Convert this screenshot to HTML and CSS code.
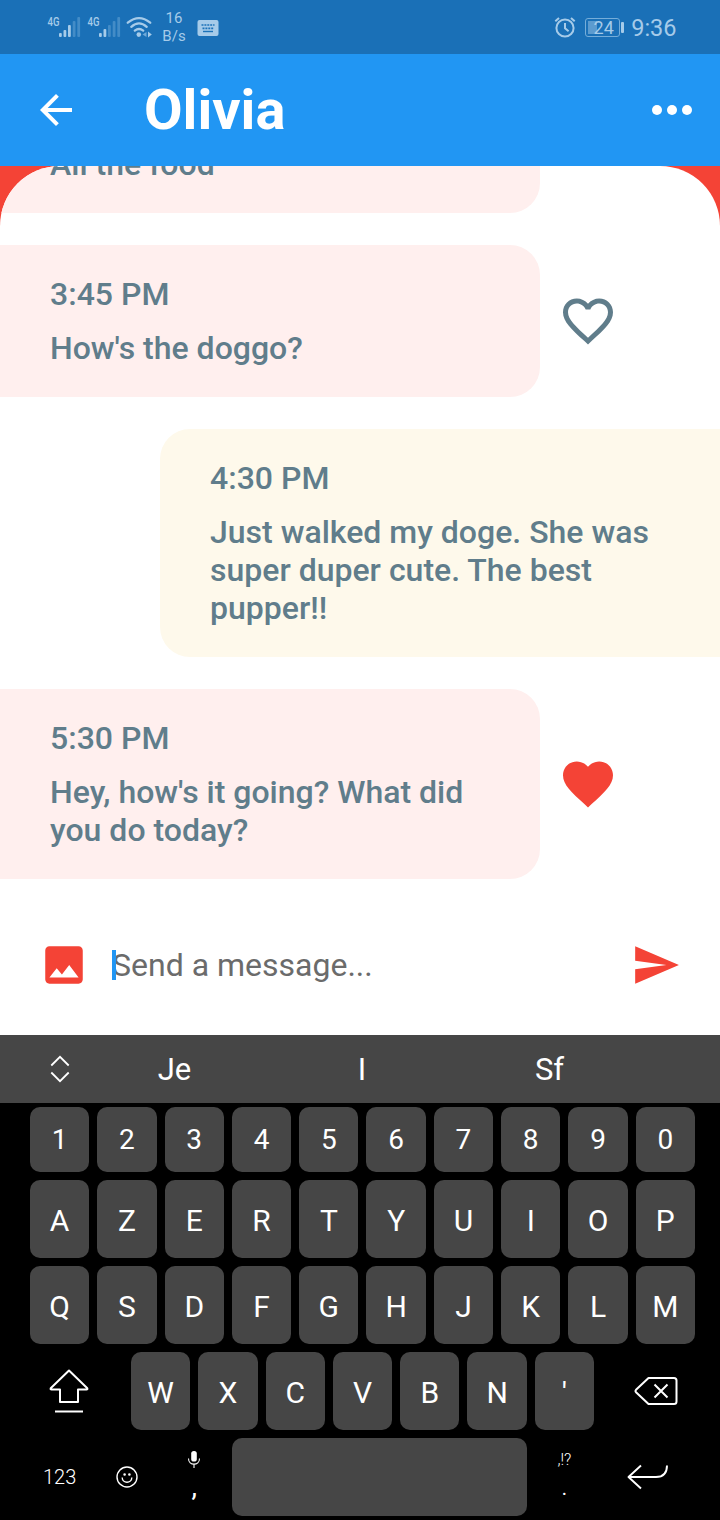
FILE: index.html
```html
<!DOCTYPE html>
<html lang="en">
<head>
<meta charset="utf-8">
<title>Olivia</title>
<link rel="stylesheet" href="styles.css">
</head>
<body>
<div class="screen">
  <header class="status">
    <svg class="status-signals" width="106" height="28" viewBox="47 13 106 28">
      <g fill="#a6cbe9">
        <rect x="59" y="33" width="2.8" height="4" rx="1"/><rect x="63.5" y="30" width="2.8" height="7" rx="1"/><rect x="68" y="25" width="2.8" height="12" rx="1"/>
        <rect x="99" y="33" width="2.8" height="4" rx="1"/><rect x="103.500" y="29" width="2.8" height="8" rx="1"/>
      </g>
      <g fill="#438cc7">
        <rect x="72.700" y="21" width="2.800" height="16" rx="1"/><rect x="77.300" y="17" width="2.800" height="20" rx="1"/>
        <rect x="108" y="25" width="2.800" height="12" rx="1"/><rect x="112.700" y="21" width="2.800" height="16" rx="1"/><rect x="117.300" y="17" width="2.800" height="20" rx="1"/>
      </g>
      <g class="network"><text x="47.500" y="26" textLength="12" lengthAdjust="spacingAndGlyphs">4G</text><text x="87.500" y="26" textLength="12" lengthAdjust="spacingAndGlyphs">4G</text></g>
      <g fill="none" stroke="#a6cbe9" stroke-width="2.300" stroke-linecap="round">
        <path d="M127.800 22.700Q139 13.500 150.200 22.700M131.300 26.800Q139 20 146.700 26.800M134.800 30.600Q139 27.300 143.200 30.600"/>
      </g>
      <circle cx="138.800" cy="34.600" r="2.300" fill="#a6cbe9"/>
      <path d="M146.500 32v5l-4-2.500z" fill="#6fa9d8"/><path d="M148 31.500v6l3.800-3z" fill="#a6cbe9"/>
    </svg>
    <div class="speed"><span>16</span><span>B/s</span></div>
    <svg class="status-keyboard" width="22" height="16" viewBox="0 0 22 16"><rect x=".5" width="21" height="16" rx="2" fill="#a6cbe9"/><path d="M4.500 5h13M5.500 8.300h11" stroke="#1c72b8" stroke-width="1.700" stroke-dasharray="2 .9"/><path d="M6 11.500h10" stroke="#1c72b8" stroke-width="1.400"/></svg>
    <svg class="alarm" width="22" height="22" viewBox="0 0 22 22" fill="none" stroke="#a6cbe9" stroke-width="2"><circle cx="11" cy="12" r="8.600"/><path d="M11 7v5.300l3.600 2.900M1.300 5.300 5 2M20.700 5.300 17 2"/></svg>
    <div class="battery"><span>24</span></div><i class="battery-tip"></i>
    <time class="clock">9:36</time>
  </header>

  <nav class="appbar">
    <svg class="back" width="48" height="48" viewBox="0 0 24 24" fill="#fff"><path d="M20 11H7.830l5.590-5.590L12 4l-8 8 8 8 1.410-1.410L7.830 13H20v-2z"/></svg>
    <h1 class="title">Olivia</h1>
    <svg width="60" height="60" viewBox="0 0 24 24" fill="#fff"><circle cx="6" cy="12" r="2"/><circle cx="12" cy="12" r="2"/><circle cx="18" cy="12" r="2"/></svg>
  </nav>

  <main class="backdrop">
    <section class="messages">
      <div class="row"><article class="bubble"><div class="time">3:15 PM</div><p class="text">All the food</p></article></div>
      <div class="row">
        <article class="bubble"><div class="time">3:45 PM</div><p class="text">How's the doggo?</p></article>
        <svg class="heart" width="60" height="60" viewBox="0 0 24 24" fill="#607d8b"><path d="M16.500 3c-1.740 0-3.410.810-4.500 2.090C10.910 3.810 9.240 3 7.500 3 4.420 3 2 5.420 2 8.500c0 3.780 3.400 6.860 8.550 11.540L12 21.350l1.450-1.320C18.600 15.360 22 12.280 22 8.500 22 5.420 19.580 3 16.500 3zm-4.400 15.550l-.1.100-.1-.1C7.140 14.240 4 11.390 4 8.500 4 6.500 5.500 5 7.500 5c1.540 0 3.040.990 3.570 2.360h1.870C13.460 5.990 14.960 5 16.500 5c2 0 3.500 1.500 3.500 3.500 0 2.890-3.140 5.740-7.900 10.050z"/></svg>
      </div>
      <div class="row"><article class="bubble mine"><div class="time">4:30 PM</div><p class="text">Just walked my doge. She was<br>super duper cute. The best<br>pupper!!</p></article></div>
      <div class="row">
        <article class="bubble"><div class="time">5:30 PM</div><p class="text">Hey, how's it going? What did<br>you do today?</p></article>
        <svg class="heart" width="60" height="60" viewBox="0 0 24 24" fill="#f44336"><path d="M12 21.350l-1.450-1.320C5.400 15.360 2 12.280 2 8.500 2 5.420 4.420 3 7.500 3c1.740 0 3.410.810 4.500 2.090C13.090 3.810 14.760 3 16.500 3 19.580 3 22 5.420 22 8.500c0 3.780-3.400 6.860-8.550 11.540L12 21.350z"/></svg>
      </div>
    </section>
  </main>

  <div class="composer">
    <svg width="50" height="50" viewBox="0 0 24 24" fill="#f44336"><path d="M21 19V5c0-1.100-.9-2-2-2H5c-1.100 0-2 .9-2 2v14c0 1.100.9 2 2 2h14c1.100 0 2-.9 2-2zM8.500 13.500l2.500 3.010L14.500 12l4.500 6H5l3.500-4.500z"/></svg>
    <div class="field"><i class="caret"></i><span class="hint">Send a message...</span></div>
    <svg width="50" height="50" viewBox="0 0 24 24" fill="#f44336"><path d="M2.010 21L23 12 2.010 3 2 10l15 2-15 2z"/></svg>
  </div>

  <div class="suggestions">
    <svg class="expand" width="20" height="28" viewBox="0 0 20 28" fill="none" stroke="#fff" stroke-width="1.800"><path d="M1.300 10.500 10 1.800l8.700 8.700M1.300 17.500l8.700 8.700 8.700-8.700"/></svg>
    <span>Je</span><span>I</span><span>Sf</span>
  </div>
  <div class="keyboard">
    <div class="keys numbers"><b>1</b><b>2</b><b>3</b><b>4</b><b>5</b><b>6</b><b>7</b><b>8</b><b>9</b><b>0</b></div>
    <div class="keys"><b>A</b><b>Z</b><b>E</b><b>R</b><b>T</b><b>Y</b><b>U</b><b>I</b><b>O</b><b>P</b></div>
    <div class="keys"><b>Q</b><b>S</b><b>D</b><b>F</b><b>G</b><b>H</b><b>J</b><b>K</b><b>L</b><b>M</b></div>
    <div class="keys">
      <div class="plain wide shift"><svg width="40" height="46" viewBox="0 0 40 46" fill="none" stroke="#fff" stroke-width="2" stroke-linejoin="round"><path d="M20 2.500 1.700 20.300q-.5 1.200.8 1.200H11V34h18V21.500h8.500q1.300 0 .8-1.200z"/><path d="M6 43.500h28"/></svg></div>
      <b>W</b><b>X</b><b>C</b><b>V</b><b>B</b><b>N</b><b>'</b>
      <div class="plain wide erase"><svg width="44" height="30" viewBox="0 0 44 30" fill="none" stroke="#fff" stroke-width="2" stroke-linejoin="round"><path d="M14.500 2H40q2.500 0 2.500 2.500v21q0 2.500-2.500 2.500H14.500L2 16.200q-1-1.200 0-2.400z"/><path d="M20.500 8.500l13 13M33.500 8.500l-13 13"/></svg></div>
    </div>
    <div class="keys">
      <div class="plain mode">123</div>
      <div class="plain"><svg width="22" height="22" viewBox="0 0 22 22" fill="none" stroke="#fff" stroke-width="1.400"><circle cx="11" cy="11" r="10"/><path d="M6.200 11.500c0 6.400 9.600 6.400 9.600 0"/><circle cx="8.600" cy="8.500" r=".6"/><circle cx="13.400" cy="8.500" r=".6"/></svg></div>
      <div class="plain stack mic"><svg width="14" height="18" viewBox="0 0 14 18"><rect x="4.200" y="1" width="5.600" height="10.500" rx="2.600" fill="#fff"/><path d="M1.500 8.500c0 7.500 11 7.500 11 0M7 14.500V18" fill="none" stroke="#fff" stroke-width="1.100"/></svg><span class="comma">,</span></div>
      <b class="space"></b>
      <div class="plain stack marks"><span class="small">,!?</span><span class="dot">.</span></div>
      <div class="plain wide enter"><svg width="42" height="26" viewBox="0 0 42 26" fill="none" stroke="#fff" stroke-width="1.900" stroke-linejoin="round"><path d="M14 1.500 1.500 13 14 24.500M1.500 13H29q11 0 11-11.500"/></svg></div>
    </div>
  </div>
</div>
</body>
</html>
```
FILE: styles.css
```css
* { box-sizing: border-box; }
body { margin: 0; font-family: Roboto, "Liberation Sans", sans-serif; }
svg { display: block; flex: none; }
.screen { width: 720px; height: 1520px; display: flex; flex-direction: column; overflow: hidden; background: #fff; }
.status { height: 54px; flex: none; display: flex; align-items: center; padding: 0 43.500px 0 47px; background: #1a70b7; color: #a6cbe9; }
.network { font: 500 12.500px Roboto, sans-serif; fill: #a6cbe9; }
.speed { width: 24px; margin-left: 9px; display: flex; flex-direction: column; align-items: center; font-size: 15px; line-height: 18px; }
.status-keyboard { margin: 2px 0 0 11px; }
.alarm { margin-left: auto; }
.battery { width: 35px; height: 19px; margin-left: 9px; border: 1.500px solid #75add9; border-radius: 3px; background: linear-gradient(#5c9bcf, #5c9bcf) 2px 2px / 9px 13px no-repeat; font-size: 18px; line-height: 17px; text-align: center; text-indent: 2px; }
.battery-tip { width: 3px; height: 11px; margin-left: 1px; background: #a6cbe9; border-radius: 1px; }
.clock { margin-left: 7px; font-size: 23.500px; line-height: 30px; margin-top: 2px; }
.appbar { height: 112px; flex: none; display: flex; align-items: center; padding: 0 18px 0 32px; background: #2196f3; color: #fff; }
.title { flex: 1; margin: 0 0 0 64px; font-size: 56px; font-weight: 700; line-height: 66px; }
.backdrop { height: 729px; flex: none; background: linear-gradient(#f44336 60px, #fff 60px); }
.messages { height: 100%; padding-bottom: 16px; display: flex; flex-direction: column; justify-content: flex-end; gap: 32px; overflow: hidden; background: #fff; border-radius: 60px 60px 0 0; }
.row { flex: none; display: flex; align-items: center; }
.bubble { width: 540px; padding: 30px 50px; background: #ffefee; border-radius: 0 30px 30px 0; color: #607d8b; font-size: 32px; font-weight: 500; line-height: 38px; white-space: nowrap; }
.bubble.mine { width: 560px; margin-left: auto; background: #fef9eb; border-radius: 30px 0 0 30px; }
.text { margin: 16px 0 0; }
.heart { margin-left: 18px; }
.composer { height: 140px; flex: none; display: flex; align-items: center; padding: 0 39px; }
.field { flex: 1; margin-left: 23px; position: relative; font-size: 32px; line-height: 38px; color: #6b6b6b; }
.caret { position: absolute; left: 0; top: 4px; width: 4px; height: 30px; background: #2196f3; }
.suggestions { height: 68px; flex: none; display: grid; grid-template-columns: 81px 187px 188px 187px; align-items: center; background: #464646; color: #fff; font-size: 31px; text-align: center; }
.expand { margin-left: 50px; }
.keyboard { flex: 1; display: flex; flex-direction: column; gap: 8px; padding: 4px 25px 0 30px; background: #000; color: #fff; }
.keys { height: 78px; display: grid; grid-template-columns: repeat(20, minmax(0, 1fr)); gap: 8px; }
.keys > * { grid-column: span 2; display: flex; align-items: center; justify-content: center; }
.keys b { padding-top: 2px; border-radius: 10px; background: #464646; font-weight: 400; font-size: 30px; }
.keys.numbers { height: 65px; }
.numbers b { font-size: 28px; padding: 0; }
.keys .wide { grid-column: span 3; }
.keys .space { grid-column: span 9; }
.shift { padding-right: 15px; }
.erase { padding-left: 14px; }
.mode { font-size: 20px; font-weight: 300; letter-spacing: 0; }
.keys .stack { flex-direction: column; justify-content: flex-start; }
.mic { padding-top: 12px; }
.comma { font-size: 28px; line-height: 30px; margin-top: 4px; }
.marks { padding-top: 13px; }
.small { font-size: 16px; line-height: 18px; font-weight: 300; }
.dot { font-size: 20px; line-height: 26px; margin-top: 6px; }
.enter { padding-right: 2px; }
```
